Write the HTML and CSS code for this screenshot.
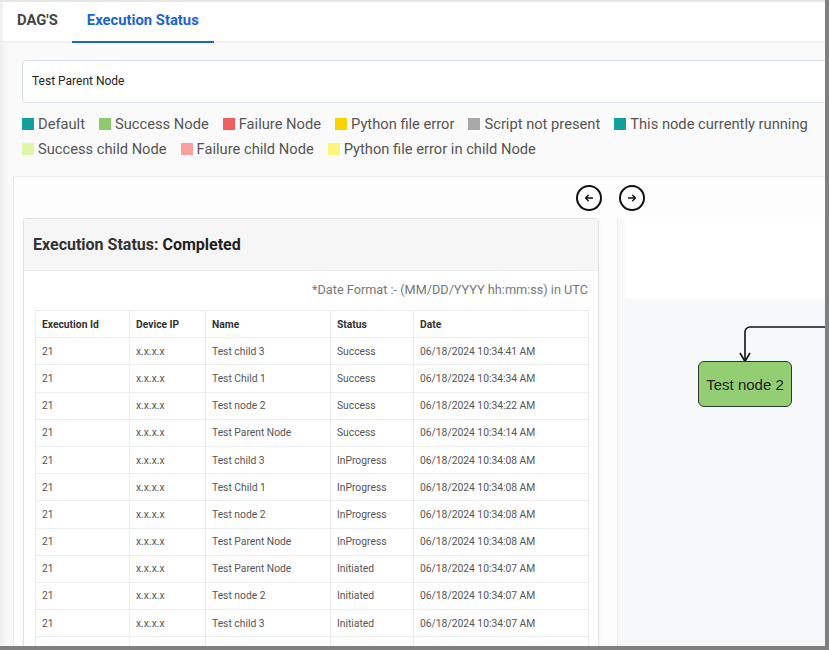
FILE: index.html
```html
<!DOCTYPE html>
<html>
<head>
<meta charset="utf-8">
<link rel="stylesheet" href="styles.css">
</head>
<body>
<div class="frame">
  <div class="tabs">
    <div class="tab">DAG'S</div>
    <div class="tab active">Execution Status</div>
  </div>
  <div class="search">Test Parent Node</div>
  <div class="legend">
    <div class="legend-row">
      <span class="item"><i class="sq c-default"></i>Default</span>
      <span class="item"><i class="sq c-success"></i>Success Node</span>
      <span class="item"><i class="sq c-failure"></i>Failure Node</span>
      <span class="item"><i class="sq c-pyerr"></i>Python file error</span>
      <span class="item"><i class="sq c-noscript"></i>Script not present</span>
      <span class="item"><i class="sq c-running"></i>This node currently running</span>
    </div>
    <div class="legend-row">
      <span class="item"><i class="sq c-schild"></i>Success child Node</span>
      <span class="item"><i class="sq c-fchild"></i>Failure child Node</span>
      <span class="item"><i class="sq c-pchild"></i>Python file error in child Node</span>
    </div>
  </div>
  <div class="board">
    <div class="nav">
      <button class="circle"><svg width="10" height="10" viewBox="0 0 10 10"><path d="M8.5 5H1.8M4.3 2.3L1.6 5l2.7 2.7" fill="none" stroke="#111" stroke-width="1.4" stroke-linecap="round" stroke-linejoin="round"/></svg></button>
      <button class="circle"><svg width="10" height="10" viewBox="0 0 10 10"><path d="M1.5 5h6.7M5.7 2.3L8.4 5 5.7 7.7" fill="none" stroke="#111" stroke-width="1.4" stroke-linecap="round" stroke-linejoin="round"/></svg></button>
    </div>
    <div class="panes">
      <div class="card">
        <div class="card-head"><span class="lbl">Execution Status:</span> <span class="val">Completed</span></div>
        <div class="card-body">
          <div class="fmt">*Date Format :- (MM/DD/YYYY hh:mm:ss) in UTC</div>
          <table class="tbl">
            <colgroup><col class="w1"><col class="w2"><col class="w3"><col class="w4"><col class="w5"></colgroup>
            <thead><tr><th>Execution Id</th><th>Device IP</th><th>Name</th><th>Status</th><th>Date</th></tr></thead>
            <tbody>
              <tr><td>21</td><td>x.x.x.x</td><td>Test child 3</td><td>Success</td><td>06/18/2024 10:34:41 AM</td></tr>
              <tr><td>21</td><td>x.x.x.x</td><td>Test Child 1</td><td>Success</td><td>06/18/2024 10:34:34 AM</td></tr>
              <tr><td>21</td><td>x.x.x.x</td><td>Test node 2</td><td>Success</td><td>06/18/2024 10:34:22 AM</td></tr>
              <tr><td>21</td><td>x.x.x.x</td><td>Test Parent Node</td><td>Success</td><td>06/18/2024 10:34:14 AM</td></tr>
              <tr><td>21</td><td>x.x.x.x</td><td>Test child 3</td><td>InProgress</td><td>06/18/2024 10:34:08 AM</td></tr>
              <tr><td>21</td><td>x.x.x.x</td><td>Test Child 1</td><td>InProgress</td><td>06/18/2024 10:34:08 AM</td></tr>
              <tr><td>21</td><td>x.x.x.x</td><td>Test node 2</td><td>InProgress</td><td>06/18/2024 10:34:08 AM</td></tr>
              <tr><td>21</td><td>x.x.x.x</td><td>Test Parent Node</td><td>InProgress</td><td>06/18/2024 10:34:08 AM</td></tr>
              <tr><td>21</td><td>x.x.x.x</td><td>Test Parent Node</td><td>Initiated</td><td>06/18/2024 10:34:07 AM</td></tr>
              <tr><td>21</td><td>x.x.x.x</td><td>Test node 2</td><td>Initiated</td><td>06/18/2024 10:34:07 AM</td></tr>
              <tr><td>21</td><td>x.x.x.x</td><td>Test child 3</td><td>Initiated</td><td>06/18/2024 10:34:07 AM</td></tr>
              <tr><td>21</td><td>x.x.x.x</td><td>Test Child 1</td><td>Initiated</td><td>06/18/2024 10:34:07 AM</td></tr>
            </tbody>
          </table>
        </div>
      </div>
      <div class="canvas">
        <div class="canvas-top"></div>
        <svg class="edge" width="220" height="60" viewBox="0 0 220 60"><path d="M220 7H132a5 5 0 0 0-5 5V40" fill="none" stroke="#111" stroke-width="1.6"/><path d="M122 33l5 8.5 5-8.5" fill="none" stroke="#111" stroke-width="1.6"/></svg>
        <div class="node">Test node 2</div>
      </div>
    </div>
  </div>
</div>
</body>
</html>
```
FILE: styles.css
```css
* { box-sizing: border-box; }
html, body { margin: 0; padding: 0; }
body {
  background: #808080;
  font-family: Roboto, "Liberation Sans", Arial, sans-serif;
  width: 829px;
  height: 650px;
  overflow: hidden;
}
.frame {
  width: 825px;
  height: 646px;
  overflow: hidden;
  background: #fafafa;
  border-top: 2px solid #e6e6e6;
  box-shadow: inset 10px 0 10px -8px rgba(0,0,0,0.07);
  position: relative;
}
.tabs {
  display: flex;
  margin-left: 3px;
  border-bottom: 2px solid #efefef;
  background: #fff;
  height: 41px;
}
.tab {
  padding: 0 14px;
  font-size: 14.8px;
  font-weight: 700;
  color: #444;
  line-height: 36px;
  height: 41px;
}
.tab.active {
  color: #1a63d6;
  border-bottom: 2px solid #1a63d6;
  height: 41px;
  margin-bottom: -2px;
  padding: 0 15px;
}
.search {
  margin: 17px 0 0 22px;
  width: 820px;
  height: 43px;
  border: 1px solid #d9e0e8;
  border-radius: 4px;
  background: #fff;
  font-size: 12px;
  color: #222;
  padding-left: 9px;
  line-height: 41px;
}
.legend {
  margin: 8px 0 0 22px;
}
.legend-row {
  display: flex;
  gap: 14px;
  height: 25px;
  align-items: center;
  white-space: nowrap;
}
.item {
  display: flex;
  align-items: center;
  font-size: 14.7px;
  color: #555;
}
.sq {
  display: inline-block;
  width: 12px;
  height: 12px;
  margin-right: 4px;
}
.c-default { background: #139e9b; }
.c-success { background: #8ecb6c; }
.c-failure { background: #ec6160; }
.c-pyerr { background: #fad200; }
.c-noscript { background: #a8a8a8; }
.c-running { background: #139e9b; }
.c-schild { background: #dcf7a8; }
.c-fchild { background: #f7a09e; }
.c-pchild { background: #fbf67a; }
.board {
  margin: 15px 0 0 13px;
  width: 1194px;
  height: 520px;
  border: 1px solid #ececec;
  background: #fdfdfd;
}
.nav {
  display: flex;
  justify-content: center;
  gap: 17px;
  height: 41px;
  padding-top: 8px;
}
.circle {
  width: 26px;
  height: 26px;
  border: 2px solid #111;
  border-radius: 50%;
  background: #fff;
  padding: 0;
  display: flex;
  align-items: center;
  justify-content: center;
}
.panes {
  display: flex;
  padding-left: 9px;
  gap: 18px;
}
.card {
  width: 576px;
  border: 1px solid #e2e2e2;
  border-radius: 3px;
  background: #fff;
  box-shadow: 0 1px 3px rgba(0,0,0,0.06);
}
.card-head {
  height: 52px;
  background: #f6f6f6;
  border-bottom: 1px solid #ebebeb;
  padding-left: 9px;
  line-height: 52px;
  font-size: 16px;
  font-weight: 700;
  color: #333;
}
.card-head .val { color: #1e1e1e; }
.card-body {
  padding: 10px 10px 0 11px;
}
.fmt {
  text-align: right;
  font-size: 12.7px;
  color: #777;
  line-height: 18px;
}
.tbl {
  margin-top: 11px;
  border-collapse: collapse;
  width: 553px;
  font-size: 10.3px;
  table-layout: fixed;
}
.w1 { width: 94px; }
.w2 { width: 76px; }
.w3 { width: 125px; }
.w4 { width: 83px; }
.w5 { width: 175px; }
.tbl th, .tbl td {
  border: 1px solid #e9edf0;
  height: 27.2px;
  padding: 0 6px;
  text-align: left;
  white-space: nowrap;
}
.tbl th { font-weight: 700; color: #333; }
.tbl td { color: #555; }
.canvas {
  position: relative;
  width: 520px;
  height: 480px;
  background: #f7f8fa;
  border-left: 1px solid #ececec;
}
.canvas-top {
  margin-left: 7px;
  height: 80px;
  background: #fff;
}
.edge {
  position: absolute;
  left: 0;
  top: 102px;
}
.node {
  position: absolute;
  left: 80px;
  top: 143px;
  width: 94px;
  height: 46px;
  background: #93cf72;
  border: 1.5px solid #333;
  border-radius: 6px;
  font-family: "Liberation Sans", Arial, sans-serif;
  font-size: 15px;
  color: #222;
  display: flex;
  align-items: center;
  justify-content: center;
}
```
